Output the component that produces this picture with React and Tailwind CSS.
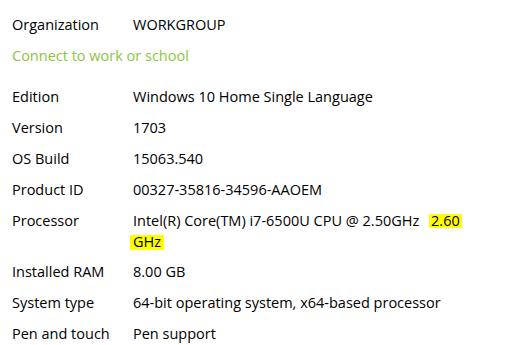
export default function App() {
  const rows = [
    ["Edition", "Windows 10 Home Single Language"],
    ["Version", "1703"],
    ["OS Build", "15063.540"],
    ["Product ID", "00327-35816-34596-AAOEM"],
  ];
  const rows2 = [
    ["Installed RAM", "8.00 GB"],
    ["System type", "64-bit operating system, x64-based processor"],
    ["Pen and touch", "Pen support"],
  ];
  const Row = ({ label, children }) => (
    <div className="flex">
      <div className="w-[121px] shrink-0">{label}</div>
      <div>{children}</div>
    </div>
  );
  return (
    <div
      className="w-[513px] h-[345px] bg-white text-black text-[14.5px] leading-[21px] pl-[12px] pt-[14px] overflow-hidden"
      style={{ fontFamily: '"Segoe UI", "Open Sans", "Noto Sans", sans-serif' }}
    >
      <Row label="Organization">WORKGROUP</Row>
      <div className="mt-[10px] text-[#8cc63f]">Connect to work or school</div>
      <div className="mt-[20px] flex flex-col gap-[10px]">
        {rows.map(([l, v]) => (
          <Row key={l} label={l}>{v}</Row>
        ))}
        <Row label="Processor">
          <div>
            Intel(R) Core(TM) i7-6500U CPU @ 2.50GHz{" "}
            <span className="ml-[6px] inline-block bg-[#ffff00] px-[2px] leading-[14px] h-[14px]">2.60</span>
          </div>
          <div>
            <span className="-ml-[3px] inline-block bg-[#ffff00] px-[3px] leading-[14px] h-[15px]">GHz</span>
          </div>
        </Row>
      </div>
      <div className="mt-[9px] flex flex-col gap-[10px]">
        {rows2.map(([l, v]) => (
          <Row key={l} label={l}>{v}</Row>
        ))}
      </div>
    </div>
  );
}
